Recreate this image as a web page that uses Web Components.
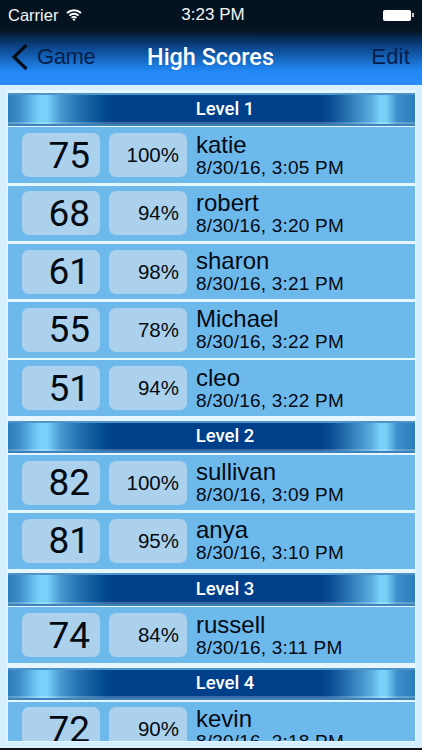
<!DOCTYPE html>
<html>
<head>
<meta charset="utf-8">
<title>High Scores</title>
<style>
  html, body { margin: 0; padding: 0; height: 100%; }
  body {
    width: 422px;
    height: 750px;
    overflow: hidden;
    font-family: "Liberation Sans", Arial, sans-serif;
    background: #d9f1ff;
  }
  high-scores-app { height: 750px; }
</style>
</head>
<body>
<high-scores-app>
  <status-bar slot="top"></status-bar>
  <nav-bar slot="top" back="Game" title="High Scores" action="Edit"></nav-bar>
  <score-section title="Level 1">
    <score-row score="75" percent="100%" name="katie" date="8/30/16, 3:05 PM"></score-row>
    <score-row score="68" percent="94%" name="robert" date="8/30/16, 3:20 PM"></score-row>
    <score-row score="61" percent="98%" name="sharon" date="8/30/16, 3:21 PM"></score-row>
    <score-row score="55" percent="78%" name="Michael" date="8/30/16, 3:22 PM"></score-row>
    <score-row score="51" percent="94%" name="cleo" date="8/30/16, 3:22 PM"></score-row>
  </score-section>
  <score-section title="Level 2">
    <score-row score="82" percent="100%" name="sullivan" date="8/30/16, 3:09 PM"></score-row>
    <score-row score="81" percent="95%" name="anya" date="8/30/16, 3:10 PM"></score-row>
  </score-section>
  <score-section title="Level 3">
    <score-row score="74" percent="84%" name="russell" date="8/30/16, 3:11 PM"></score-row>
  </score-section>
  <score-section title="Level 4">
    <score-row score="72" percent="90%" name="kevin" date="8/30/16, 3:18 PM"></score-row>
  </score-section>
</high-scores-app>

<script>
const FONT = '"Liberation Sans", Arial, sans-serif';

class HighScoresApp extends HTMLElement {
  constructor() {
    super();
    this.attachShadow({ mode: 'open' });
    this.shadowRoot.innerHTML = `
      <style>
        :host { display: flex; flex-direction: column; background: #d5effe; font-family: ${FONT}; }
        .list { flex: 1; min-height: 0; overflow: hidden; margin: 6.3px 7px 0 8px; display: flex; flex-direction: column; background: #e6f6ff; box-shadow: 0 0 0 1px #e6f6ff; }
        .foot { height: 7px; flex: none; }
        .edge { height: 2px; flex: none; background: #111; }
      </style>
      <slot name="top"></slot>
      <div class="list"><slot></slot></div>
      <div class="foot"></div>
      <div class="edge"></div>
    `;
  }
}

class StatusBar extends HTMLElement {
  constructor() {
    super();
    this.attachShadow({ mode: 'open' });
    this.shadowRoot.innerHTML = `
      <style>
        :host { display: grid; grid-template-columns: 1fr auto 1fr; align-items: center; height: 30px; padding: 0 8px; box-sizing: border-box; background: #04131f; color: #f4f6f8; font-size: 16.5px; }
        .left { display: flex; align-items: center; gap: 8px; }
        .time { font-size: 17px; margin-left: 4px; }
        .right { justify-self: end; display: flex; align-items: center; }
        .batt { width: 28px; height: 11px; background: #fff; border-radius: 2px; }
        .nub { width: 2px; height: 4px; background: #ccc; margin-left: 1px; }
      </style>
      <div class="left">Carrier
        <svg width="16" height="14" viewBox="0 0 16 14">
          <path d="M1 5 A10.2 10.2 0 0 1 15 5 M3.4 7.6 A6.8 6.8 0 0 1 12.6 7.6 M5.6 9.9 A3.4 3.4 0 0 1 10.4 9.9" fill="none" stroke="#fff" stroke-width="1.9"/>
          <path d="M6.5 11.2 L8 13.2 L9.5 11.2 A2.2 2.2 0 0 0 6.5 11.2 Z" fill="#fff"/>
        </svg>
      </div>
      <div class="time">3:23 PM</div>
      <div class="right"><div class="batt"></div><div class="nub"></div></div>
    `;
  }
}

class NavBar extends HTMLElement {
  constructor() {
    super();
    this.attachShadow({ mode: 'open' });
    this.shadowRoot.innerHTML = `
      <style>
        :host { display: grid; grid-template-columns: 1fr auto 1fr; align-items: center; height: 55px; padding: 0 12px 2px 11px; box-sizing: border-box; background: linear-gradient(#04131f 0%, #0b4488 30%, #2288f5 75%, #2a8cf8 100%); font-size: 22px; color: #06204a; }
        .back { display: flex; align-items: center; gap: 8px; }
        .back span { letter-spacing: -.4px; }
        .title { color: #fff; font-family: Roboto, ${FONT}; font-weight: 500; font-size: 23.4px; }
        .action { justify-self: end; letter-spacing: .2px; }
      </style>
      <div class="back">
        <svg width="18" height="28" viewBox="0 0 18 28"><path d="M15.5 2 L3 14 L15.5 26" fill="none" stroke="#050f1e" stroke-width="3.4"/></svg>
        <span></span>
      </div>
      <div class="title"></div>
      <div class="action"></div>
    `;
    this.shadowRoot.querySelector('.back span').textContent = this.getAttribute('back');
    this.shadowRoot.querySelector('.title').textContent = this.getAttribute('title');
    this.shadowRoot.querySelector('.action').textContent = this.getAttribute('action');
  }
}

class ScoreSection extends HTMLElement {
  constructor() {
    super();
    this.attachShadow({ mode: 'open' });
    this.shadowRoot.innerHTML = `
      <style>
        :host { display: block; flex: none; }
        .head {
          position: relative;
          height: 32.5px; margin: 2px 0 1.5px; padding: 0 0 2px 27px; box-sizing: border-box;
          display: flex; align-items: center; justify-content: center;
          color: #fff; font-family: Roboto, ${FONT}; font-weight: 500; font-size: 18.5px;
          box-shadow: inset 0 2px #4f94c8, inset 0 -2px #3e82bb, inset 0 -4px rgba(255,255,255,.22);
          background: linear-gradient(90deg, #2a7cba 0%, #3f8fcb 3%, #6cc4f2 6.6%, #7ad2fb 7.9%, #7ad2fb 9.6%, #4a9ad2 12.8%, #2a78b6 16.5%, #17609f 20%, #004a92 23.6%, #003f8a 26.3%, #003f8a 76.7%, #0a4f98 79.6%, #2d78b5 84%, #5aaee0 89.4%, #7ad2fb 91.4%, #7ad2fb 92.9%, #3c8fc9 95.6%, #2a7cba 100%);
        }
      </style>
      <div class="head"></div>
      <slot></slot>
    `;
    this.shadowRoot.querySelector('.head').textContent = this.getAttribute('title');
  }
}

class ScoreRow extends HTMLElement {
  constructor() {
    super();
    this.attachShadow({ mode: 'open' });
    this.shadowRoot.innerHTML = `
      <style>
        :host { display: flex; align-items: center; gap: 9px; height: 55.5px; margin-bottom: 2.8px; padding: 0 0 0 14px; background: #6eb9ec; color: #050a12; }
        .box { width: 78px; height: 44px; border-radius: 7px; background: #abd1ec; box-sizing: border-box; display: flex; align-items: center; justify-content: flex-end; }
        .score { font-family: Roboto, ${FONT}; font-weight: 400; font-size: 37px; padding-right: 10px; }
        .percent { font-size: 20.5px; padding-right: 8px; }
        .info { display: flex; flex-direction: column; }
        .name { font-size: 24px; line-height: 25px; }
        .date { font-size: 19px; line-height: 22px; letter-spacing: .2px; }
      </style>
      <div class="box score"></div>
      <div class="box percent"></div>
      <div class="info"><div class="name"></div><div class="date"></div></div>
    `;
    for (let key of ['score', 'percent', 'name', 'date'])
      this.shadowRoot.querySelector('.' + key).textContent = this.getAttribute(key);
  }
}

customElements.define('high-scores-app', HighScoresApp);
customElements.define('status-bar', StatusBar);
customElements.define('nav-bar', NavBar);
customElements.define('score-section', ScoreSection);
customElements.define('score-row', ScoreRow);
</script>
</body>
</html>
